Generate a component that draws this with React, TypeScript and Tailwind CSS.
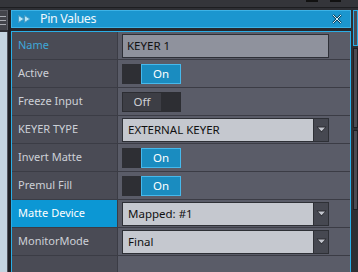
import React from "react";

const font = { fontFamily: '"Noto Sans", "DejaVu Sans", sans-serif' };

function Toggle({ on }: { on: boolean }) {
  if (on) {
    return (
      <div className="flex h-[20px] w-[59px]">
        <div className="h-full w-[19px] bg-[#2e2f34]" />
        <div className="flex h-full flex-1 items-center justify-center border border-[#46b9ec] bg-[#1a8cc0] text-[11.5px] text-white">
          On
        </div>
      </div>
    );
  }
  return (
    <div className="flex h-[20px] w-[59px] border border-[#2c2d32]">
      <div className="flex h-full w-[38px] items-center justify-center bg-[#3d3e45] text-[11.5px] text-[#cfd0d4]">
        Off
      </div>
      <div className="h-full flex-1 bg-[#2d2e33]" />
    </div>
  );
}

function Select({ value }: { value: string }) {
  return (
    <div className="flex h-[24px] w-[207px] border border-[#2e3036] bg-[#c5c8cf]">
      <div className="flex flex-1 items-center pl-[5px] text-[11.5px] text-[#111]">{value}</div>
      <div className="flex h-full w-[15px] items-center justify-center border-l border-[#2e3036] bg-[#464851]">
        <svg width="11" height="7" viewBox="0 0 11 7">
          <polygon points="0.5,0.5 10.5,0.5 5.5,6.5" fill="#2a2b30" />
          <polygon points="2,1.5 9,1.5 5.5,5.3" fill="#c3c6ce" />
        </svg>
      </div>
    </div>
  );
}

function Row({
  label,
  children,
  labelClass = "text-[#cdd0d7]",
  labelBg = "bg-[#4a4b55]",
}: {
  label: string;
  children?: React.ReactNode;
  labelClass?: string;
  labelBg?: string;
}) {
  return (
    <div className="flex h-[28px] border-b border-[#3b3c45]">
      <div className={`flex w-[106px] items-center border-r border-[#3b3c45] pl-[6px] text-[11px] ${labelBg} ${labelClass}`}>
        {label}
      </div>
      <div className="flex flex-1 items-center bg-[#5a5c68] pl-[4px]">{children}</div>
    </div>
  );
}

export default function App() {
  return (
    <div className="flex h-[272px] w-[358px] flex-col overflow-hidden bg-[#2e2f34]" style={font}>
      <div className="relative h-[8px] shrink-0 border-b border-[#1d1e21] bg-[#34353a]">
        <div className="absolute left-[306px] top-0 h-[2px] w-[12px] bg-[#111]" />
        <div className="absolute left-[330px] top-0 h-[2px] w-[11px] bg-[#111]" />
      </div>
      <div className="flex flex-1 pt-[2px]">
        <div className="flex w-[8px] shrink-0 flex-col">
          <div className="flex h-[20px] flex-col justify-center gap-[3px] border-r border-t border-[#5a5b63] bg-[#43444b]">
            <div className="h-[1px] w-[6px] bg-[#a9abb2]" />
            <div className="h-[1px] w-[6px] bg-[#a9abb2]" />
            <div className="h-[1px] w-[6px] bg-[#a9abb2]" />
          </div>
          <div className="h-[2px] bg-[#2e2f34]" />
          <div className="flex-1 border-r border-[#53545c] bg-[#c4d4e0]" />
        </div>
        <div className="w-[3px] shrink-0 bg-[#1f2024]" />
        <div className="flex w-[340px] shrink-0 flex-col">
          <div className="flex h-[18px] items-center border border-[#3db3e6] bg-[#1b96cf] pl-[6px] pr-[8px]">
            <svg width="13" height="8" viewBox="0 0 13 8">
              <polygon points="0.5,0.5 6,4 0.5,7.5" fill="#b5e6f8" stroke="#4a9cc4" strokeWidth="1" />
              <polygon points="6.5,0.5 12,4 6.5,7.5" fill="#b5e6f8" stroke="#4a9cc4" strokeWidth="1" />
            </svg>
            <span className="ml-[9px] text-[12.5px] tracking-[-0.4px] text-[#eef8fd]">Pin Values</span>
            <div className="flex-1" />
            <svg width="10" height="10" viewBox="0 0 10 10">
              <path d="M1 1 L9 9 M9 1 L1 9" stroke="#0e3d55" strokeWidth="2.2" />
              <path d="M1 1 L9 9 M9 1 L1 9" stroke="#d8f2fc" strokeWidth="1" />
            </svg>
          </div>
          <div className="h-[3px] bg-[#26272c]" />
          <div className="flex flex-1 flex-col border-l border-r border-t border-[#2aaee6] bg-[#5a5c68]">
            <Row label="Name" labelClass="text-[#3ea7d8]">
              <div className="flex h-[24px] w-[207px] items-center border border-[#2e3037] bg-[#8f929d] pl-[4px] text-[11.5px] text-[#111]">
                KEYER 1
              </div>
            </Row>
            <Row label="Active">
              <Toggle on />
            </Row>
            <Row label="Freeze Input">
              <Toggle on={false} />
            </Row>
            <Row label="KEYER TYPE">
              <Select value="EXTERNAL KEYER" />
            </Row>
            <Row label="Invert Matte">
              <Toggle on />
            </Row>
            <Row label="Premul Fill">
              <Toggle on />
            </Row>
            <Row label="Matte Device" labelBg="bg-[#0c97d4]" labelClass="text-white">
              <Select value="Mapped: #1" />
            </Row>
            <Row label="MonitorMode">
              <Select value="Final" />
            </Row>
            <div className="flex flex-1">
              <div className="w-[106px] border-r border-[#3b3c45] bg-[#4a4b55]" />
              <div className="flex-1 bg-[#5a5c68]" />
            </div>
          </div>
        </div>
        <div className="flex flex-1 flex-col gap-[2px] pl-[2px]">
          <div className="h-[36px] border border-[#2aaee6] bg-[#4a4b55]" />
          <div className="h-[80px] border border-[#1d1e22] bg-[#4a4b53]" />
          <div className="h-[80px] border border-[#1d1e22] bg-[#4a4b53]" />
        </div>
      </div>
    </div>
  );
}
